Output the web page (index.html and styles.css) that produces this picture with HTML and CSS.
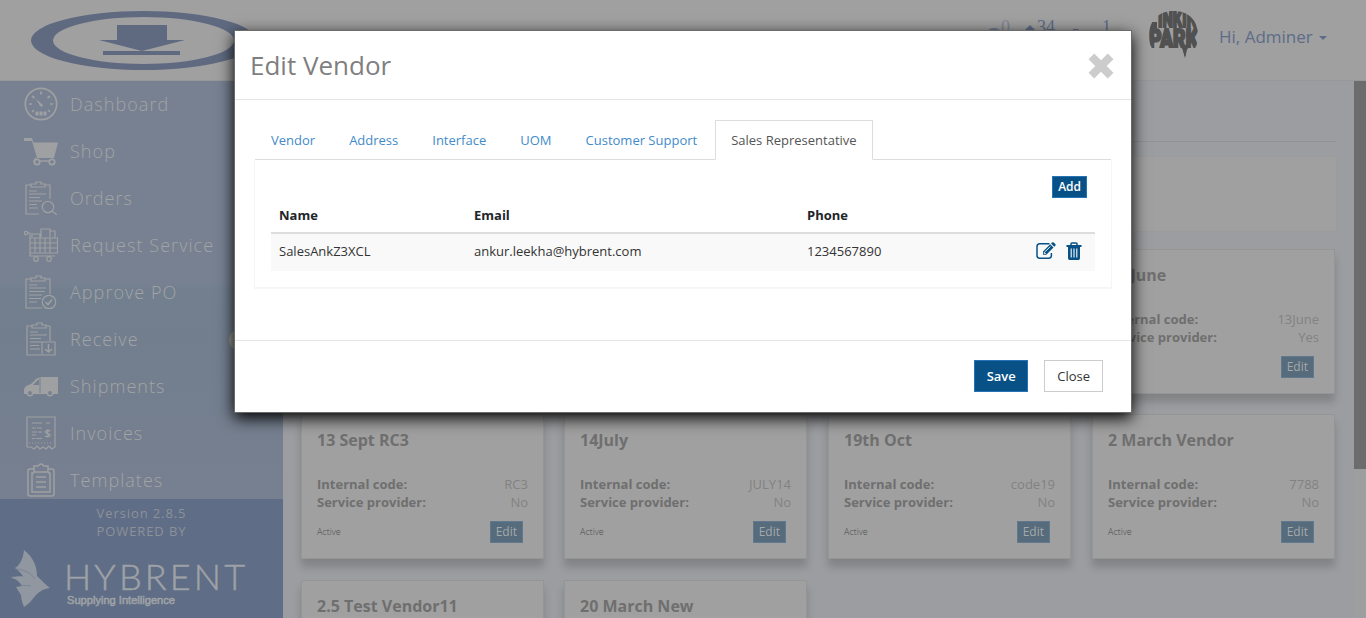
FILE: index.html
```html
<!DOCTYPE html>
<html lang="en">
<head>
<meta charset="utf-8">
<title>Edit Vendor</title>
<link rel="stylesheet" href="styles.css">
</head>
<body>
<div class="app">
  <header class="topbar">
    <svg class="brand" width="232" height="62" viewBox="28 10 232 62">
      <path fill="#5f6a80" fill-rule="evenodd" d="M31 40.5a112.500 29.500 0 1 0 225 0a112.500 29.500 0 1 0 -225 0zM53 40.500a90.500 23.500 0 1 1 181 0a90.500 23.500 0 1 1 -181 0z"/>
      <path fill="#5f6a80" d="M117 25h50v15h18l-43 11l-43-11h18zM103 51h77v4h-77z"/>
    </svg>
    <div class="status">
      <span class="stat pale"><svg width="14" height="12" viewBox="0 0 14 12"><ellipse cx="7" cy="6" rx="7" ry="5"/></svg><b>0</b></span>
      <span class="stat"><svg width="14" height="14" viewBox="0 0 14 14"><path d="M7 0l7 7H0z"/></svg><b>34</b></span>
      <span class="stat dark"><svg width="22" height="12" viewBox="0 0 22 12"><path d="M0 1h5l2 2h15l-3 7H8L5 3H0z"/></svg><b>1</b></span>
    </div>
    <svg class="avatar" width="50" height="50" viewBox="0 0 50 50">
      <defs><clipPath id="disc"><path d="M0 25C0 8 11 0 25 0S49 9 49 25c0 5-1 9-3 12H39L36 48 33 37H3C1 34 0 30 0 25z"/></clipPath></defs>
      <g clip-path="url(#disc)">
        <path d="M32 34h7l-3 14z"/>
        <text x="9" y="16" textLength="39" lengthAdjust="spacingAndGlyphs" class="av-top">INKIN</text>
        <path d="M0 11h8v6H0z"/>
        <text x="0" y="36.500" textLength="49" lengthAdjust="spacingAndGlyphs" class="av-main">PARK</text>
      </g>
    </svg>
    <div class="user">Hi, Adminer<i class="caret"></i></div>
  </header>
  <div class="body">
    <aside class="sidebar">
      <nav class="menu">
        <a class="item"><svg class="ico" viewBox="0 0 34 34"><circle cx="17" cy="17" r="15.700" stroke-width="1.700"/><path stroke-width="1.700" d="M17 4.500v3M5 17h3M26 17h3M8 9l2.500 2M26 9l-2.500 2M8 25l2-2M26 25l-2-2"/><path class="f" d="M12 12l7 6-1 2-2-1z"/><path stroke-width="4" stroke-dasharray="3 1" d="M11.500 26.500h11"/></svg>Dashboard</a>
        <a class="item"><svg class="ico" viewBox="0 0 34 34"><path class="f" d="M0 4h8l1.500 4.500H34L30 24H13L8 7H0z"/><path stroke-width="1.500" d="M12 24l-2 3h20"/><circle class="hole" cx="13" cy="28" r="2.700" stroke-width="1.800"/><circle class="hole" cx="28" cy="28" r="2.700" stroke-width="1.800"/></svg>Shop</a>
        <a class="item"><svg class="ico" viewBox="0 0 34 34"><path d="M15 33H2V4h5M21 4h5v14M7 6h14V3h-4V1h-5v2H7zM5 10h8M5 13h17M5 16.500h11M5 20h13M5 23.500h8M5 27h9"/><circle cx="24" cy="26" r="5.700"/><path d="M28 30l5 4"/></svg>Orders</a>
        <a class="item"><svg class="ico" viewBox="0 0 34 34"><circle cx="2" cy="5" r="1.700"/><path d="M4 5h2v23h25M6 10h27.500v15H6M6 15h27M6 20h27M11 10v15M16 10v15M21 10v15M26 10v15M8 9V6h8v4M17 9V1h9v8M26 9V3h5v7"/><circle cx="12" cy="31" r="2.300"/><circle cx="25" cy="31" r="2.300"/></svg>Request Service</a>
        <a class="item"><svg class="ico" viewBox="0 0 34 34"><path d="M18 33H2V4h5M21 4h5v15M7 6h14V3h-4V1h-5v2H7zM5 10h8M5 13h17M5 16.500h16M5 20h13M5 23.500h12M5 27h8"/><circle cx="25" cy="27" r="6.700"/><path stroke-width="1.600" d="M21.500 27l2.500 2.500 4-5"/></svg>Approve PO</a>
        <a class="item"><svg class="ico" viewBox="0 0 34 34"><path d="M17 33H3V4h5M22 4h4v15M8 6h14V3h-4V1h-5v2H8zM6 10h8M6 13h17M6 16.500h11M6 20h13M6 23.500h9M6 27h10M18 20h13v13H18z"/><path stroke-width="1.500" d="M24.500 22v8M21 27l3.500 3 3.500-3"/></svg>Receive</a>
        <a class="item"><svg class="ico" viewBox="0 0 34 34"><path class="f" fill-rule="evenodd" d="M16 8h18v17H0v-5l2-3 5-2 5-5zM14 11l-5 5h6v-5z"/><path class="cut" d="M16 8v16"/><circle class="hole" cx="6" cy="24" r="2.700" stroke-width="1.500"/><circle class="hole" cx="26" cy="24" r="2.700" stroke-width="1.500"/></svg>Shipments</a>
        <a class="item"><svg class="ico" viewBox="0 0 34 34"><path d="M3 31V1h28v30l-3 2-3-3-3 3-3-2-3 2-3-3-3 3-3-2zM8 7h10M22 7h4M8 12h4M13 12h5M8 16h5M14 16h4M8 19h4M8 22.500h3M12 22.500h6"/><path stroke-dasharray="1 2" d="M5 27h24"/><text x="20.500" y="21" class="dollar">$</text></svg>Invoices</a>
        <a class="item"><svg class="ico" viewBox="0 0 34 34"><path stroke-width="1.500" d="M10 6H6q-2 0-2 2v23q0 2 2 2h22q2 0 2-2V8q0-2-2-2h-4M10 3h4q3-4 6 0h4v6H10zM10 10H8v19h18V10h-2M12 14h10M12 19h10M12 24h10"/></svg>Templates</a>
      </nav>
      <div class="powered">
        <p>Version 2.8.5<br>POWERED BY</p>
        <svg class="hybrent" width="240" height="62" viewBox="8 548 240 62">
          <path fill="#9197a0" d="M24 551c9 7 13 16 13 26 4 4 8 8 13 12-7 1-11 4-14 7-4 5-7 9-12 12-2-5-3-9-3-12l-5-8 6-1c-2-4-6-7-11-9 6-1 10 0 14 3-2-5-6-9-10-12 5-3 8-9 9-18z"/>
          <path fill="#9197a0" d="M11 579c8-3 17-2 24 3l-3 8c-4-6-12-10-21-11z"/>
          <path stroke="#717b8d" stroke-width=".7" fill="none" d="M16 570c9 1 15 4 19 10M16 588c5-2 10-2 15-1"/>
          <text x="64" y="591" textLength="181" class="word">HYBRENT</text>
          <text x="67" y="605" textLength="108" lengthAdjust="spacingAndGlyphs" class="tag">Supplying Intelligence</text>
        </svg>
      </div>
      <span class="handle"></span>
    </aside>
    <main class="main">
      <div class="heading"></div>
      <div class="filter"></div>
      <section class="cards">
        <article class="card"></article><article class="card"></article><article class="card"></article>
        <article class="card"><h3>13 June</h3><dl><dt>Internal code:</dt><dd>13June</dd><dt>Service provider:</dt><dd>Yes</dd></dl><div class="foot"><small>Active</small><span class="btn-sm">Edit</span></div></article>
        <article class="card"><h3>13 Sept RC3</h3><dl><dt>Internal code:</dt><dd>RC3</dd><dt>Service provider:</dt><dd>No</dd></dl><div class="foot"><small>Active</small><span class="btn-sm">Edit</span></div></article>
        <article class="card"><h3>14July</h3><dl><dt>Internal code:</dt><dd>JULY14</dd><dt>Service provider:</dt><dd>No</dd></dl><div class="foot"><small>Active</small><span class="btn-sm">Edit</span></div></article>
        <article class="card"><h3>19th Oct</h3><dl><dt>Internal code:</dt><dd>code19</dd><dt>Service provider:</dt><dd>No</dd></dl><div class="foot"><small>Active</small><span class="btn-sm">Edit</span></div></article>
        <article class="card"><h3>2 March Vendor</h3><dl><dt>Internal code:</dt><dd>7788</dd><dt>Service provider:</dt><dd>No</dd></dl><div class="foot"><small>Active</small><span class="btn-sm">Edit</span></div></article>
        <article class="card"><h3>2.5 Test Vendor11</h3></article>
        <article class="card"><h3>20 March New</h3></article>
      </section>
    </main>
    <div class="scroll"><div class="thumb"></div></div>
  </div>
</div>

<div class="modal">
  <div class="modal-head">
    <h2>Edit Vendor</h2>
    <svg width="28" height="28" viewBox="0 0 28 28"><path stroke="#ccc" stroke-width="8" stroke-linecap="square" d="M7.200 7.200l13.600 13.600M20.800 7.200L7.200 20.800"/></svg>
  </div>
  <div class="modal-body">
    <div class="tabs">
      <a>Vendor</a><a>Address</a><a>Interface</a><a>UOM</a><a>Customer Support</a><a class="active">Sales Representative</a>
    </div>
    <div class="pane">
      <div class="pane-actions"><span class="btn-sm solid">Add</span></div>
      <div class="row th"><span>Name</span><span>Email</span><span>Phone</span><span></span></div>
      <div class="row td"><span>SalesAnkZ3XCL</span><span>ankur.leekha@hybrent.com</span><span>1234567890</span>
        <span class="acts">
          <svg width="20" height="18" viewBox="0 0 20 18"><path fill="none" stroke="#085187" stroke-width="1.500" d="M13.500 1.800H3.700Q1 1.800 1 4.500v9Q1 16.200 3.700 16.200h9Q15.400 16.200 15.400 13.500V11"/><path fill="#085187" d="M7 9.500l7.200-7.200 3.300 3.300-7.200 7.200H7zM15 1.500l1-1q1-.7 1.800 0l1.500 1.600q.7.900 0 1.700l-1 1z"/><path stroke="#f9f9f9" d="M9 9.800l5.300-5.300M8.300 10v1.500h1.500"/></svg>
          <svg width="16" height="18" viewBox="0 0 16 18"><path fill="none" stroke="#085187" stroke-width="1.500" d="M5 3.500V2q0-1 1-1h4q1 0 1 1v1.500"/><path fill="#085187" d="M.5 3h15v2H14v11q0 2-1.500 2h-9Q2 18 2 16V5H.500z"/><path stroke="#f9f9f9" stroke-width="1.100" d="M5.200 6.500v9M8 6.500v9M10.800 6.500v9"/></svg>
        </span>
      </div>
    </div>
  </div>
  <div class="modal-foot"><span class="btn primary">Save</span><span class="btn">Close</span></div>
</div>
</body>
</html>
```
FILE: styles.css
```css
* { box-sizing: border-box; }
body { margin: 0; width: 1366px; height: 618px; overflow: hidden; font: 13px/18px "Open Sans", sans-serif; color: #212529; background: #9c9da0; }
h2, h3, p, dl, dd { margin: 0; }
.app { height: 618px; display: flex; flex-direction: column; overflow: hidden; }
.topbar { height: 81px; flex: none; display: flex; align-items: flex-start; background: #a0a0a0; border-bottom: 1px solid #97989a; }
.brand { margin: 10px 0 0 28px; flex: none; }
.status { display: flex; margin: 19px 0 0 727px; width: 162px; flex: none; color: #5d6c88; fill: #5d6c88; }
.stat { display: flex; width: 39px; height: 30px; }
.stat svg { margin-top: 6px; flex: none; }
.stat b { font: 18px/18px "Liberation Serif", serif; margin-top: -1px; }
.stat.pale { color: #7d8795; fill: #6c7b8e; width: 36px; }
.stat.pale svg { margin-top: 8px; }
.stat.dark { margin-left: 11px; }
.stat.dark svg { margin-top: 9px; margin-right: 7px; }
.avatar { margin-top: 11px; fill: #515151; flex: none; }
.av-top { font: 900 22px Roboto, sans-serif; stroke: #515151; stroke-width: 1.800; }
.av-main { font: 900 26px Roboto, sans-serif; stroke: #515151; stroke-width: 2.200; }
.user { margin: 25px 0 0 20px; font-size: 17px; line-height: 23px; color: #5d6c88; display: flex; align-items: center; white-space: nowrap; }
.caret { border: 4px solid transparent; border-top-color: #5d6c88; border-bottom: 0; margin: 3px 0 0 6px; }
.body { flex: 1; min-height: 0; display: flex; }
.sidebar { width: 283px; flex: none; display: flex; flex-direction: column; background: linear-gradient(#778191 0, #778191 200px, #727f8f 210px, #737e8e 300px, #778090 418px); position: relative; }
.menu { height: 418px; overflow: hidden; }
.item { height: 47px; display: flex; align-items: center; padding: 0 0 1px 24px; gap: 12px; font-size: 18px; font-weight: 300; letter-spacing: 1.050px; color: #a3a4a5; white-space: nowrap; }
.ico { width: 34px; height: 34px; fill: none; stroke: #9fa0a1; stroke-width: 1.200; flex: none; }
.ico .f { fill: #9fa0a1; stroke: none; }
.ico .hole { fill: #778191; }
.ico .cut { stroke: #778191; stroke-width: 1; }
.dollar { font: bold 11px "Open Sans", sans-serif; fill: #9fa0a1; stroke: none; }
.handle { position: absolute; left: 229px; top: 248px; width: 22px; height: 22px; border-radius: 50%; background: #969794; }
.powered { flex: 1; background: #5f6d87; padding-top: 5px; }
.powered p { text-align: center; color: #8c9198; letter-spacing: .9px; }
.hybrent { display: block; margin: 7px 0 0 8px; }
.word { font: 300 36px Lato, sans-serif; fill: #9ea1a5; stroke: #9ea1a5; stroke-width: .5; }
.tag { font: 11px "Liberation Sans", sans-serif; fill: #9ea1a5; stroke: #9ea1a5; stroke-width: .6; }
.main { flex: 1; padding: 0 18px; background: #9c9da0; overflow: hidden; }
.heading { height: 61px; border-bottom: 1px solid #919294; }
.filter { height: 76px; margin: 14px -1px 17px 0; background: #a0a0a0; border: 1px solid #9a9b9c; }
.cards { display: grid; grid-template-columns: 263px 264px 264px 243px; grid-auto-rows: 145px; row-gap: 20.400px; }
.card { width: 243px; background: #a0a0a0; border: 1px solid #949595; padding: 16px 15px 0; box-shadow: 0 8px 8px rgba(0, 0, 0, .17); color: #6f6f6f; }
.card h3 { font-size: 16px; line-height: 18px; white-space: nowrap; }
.card dl { display: grid; grid-template-columns: 1fr auto; margin-top: 26px; }
.card dt { font-weight: 700; }
.card dd { text-align: right; color: #828282; }
.foot { display: flex; justify-content: space-between; align-items: center; padding-right: 5px; margin-top: 10px; }
.foot small { font-size: 9px; color: #4e4e4e; font-weight: 300; }
.btn-sm { height: 22px; border: 1px solid #60798e; background: #566b7b; color: #a5a8aa; font-size: 12px; line-height: 19px; padding: 0 5px; font-weight: 500; }
.btn-sm.solid { background: #085187; border-color: #2673b5; color: #fff; }
.scroll { width: 12px; flex: none; background: #9d9e9f; }
.thumb { height: 388px; background: #6c6c6c; }
.modal { position: absolute; left: 234px; top: 30px; width: 898px; height: 383px; background: #fff; border: 1px solid #6b6b6b; box-shadow: 0 5px 15px #000; background-clip: padding-box; display: flex; flex-direction: column; }
.modal-head { height: 69px; flex: none; display: flex; justify-content: space-between; align-items: center; padding: 0 16px 0 15px; border-bottom: 1px solid #e5e5e5; }
.modal-head h2 { font-size: 26px; line-height: 36px; font-weight: 400; color: #7f7f7f; }
.modal-head svg { margin-top: 1px; }
.modal-body { height: 241px; padding: 20px 20px 0; border-bottom: 1px solid #e5e5e5; }
.tabs { display: flex; gap: 2px; height: 40px; border-bottom: 1px solid #ddd; }
.tabs a { height: 40px; border: 1px solid transparent; padding: 10px 15px 0; color: #428bca; white-space: nowrap; }
.tabs .active { background: #fff; border-color: #ddd; border-bottom-color: #fff; color: #555; }
.pane { height: 128px; margin: 0 -1px; padding: 16px 16px 0; border-right: 1px solid #f5f5f5; border-left: 1px solid #f5f5f5; border-bottom: 1px solid #f5f5f5; box-shadow: 0 1px 1px rgba(0, 0, 0, .03); }
.pane-actions { display: flex; justify-content: flex-end; padding-right: 8px; }
.row { display: grid; grid-template-columns: 195px 333px 229px 1fr; padding-left: 8px; align-items: center; }
.th { height: 36px; font-weight: 700; border-bottom: 2px solid #ddd; }
.td { height: 37px; padding-bottom: 3px; background: #f9f9f9; color: #333; }
.acts { display: flex; gap: 10px; }
.modal-foot { flex: 1; display: flex; justify-content: flex-end; gap: 16px; padding: 19px 28px 0 0; }
.btn { height: 32px; border: 1px solid #ccc; padding: 6px 12px; color: #333; }
.btn.primary { background: #085187; border-color: #2673b5; color: #fff; font-weight: 600; padding: 6px 11px; min-width: 54px; text-align: center; }
.btn-sm { min-width: 33px; text-align: center; }
.btn-sm.solid { min-width: 34px; font-weight: 600; }
```
